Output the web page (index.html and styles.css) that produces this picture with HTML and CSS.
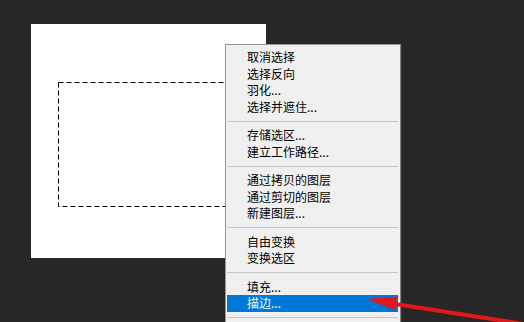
FILE: index.html
```html
<!DOCTYPE html>
<html lang="zh-CN">
<head>
<meta charset="utf-8">
<title>选区菜单</title>
<link rel="stylesheet" href="styles.css">
</head>
<body>
<div class="workspace">
  <div class="canvas">
    <svg class="marquee" width="167" height="130" viewBox="0 0 167 130">
      <path d="M0.5 0.5 H167 M0.5 0.5 V124.5 H167" fill="none" stroke="#000" stroke-width="1" stroke-dasharray="5 3"/>
    </svg>
  </div>

  <div class="menu">
    <div class="item">取消选择</div>
    <div class="item">选择反向</div>
    <div class="item">羽化...</div>
    <div class="item">选择并遮住...</div>
    <div class="sep"></div>
    <div class="item">存储选区...</div>
    <div class="item">建立工作路径...</div>
    <div class="sep"></div>
    <div class="item">通过拷贝的图层</div>
    <div class="item">通过剪切的图层</div>
    <div class="item">新建图层...</div>
    <div class="sep"></div>
    <div class="item">自由变换</div>
    <div class="item">变换选区</div>
    <div class="sep"></div>
    <div class="item">填充...</div>
    <div class="item active">描边...</div>
    <div class="sep"></div>
  </div>

  <svg class="arrow" width="524" height="322" viewBox="0 0 524 322">
    <line x1="392" y1="303.5" x2="530" y2="325" stroke="#e3161b" stroke-width="4"/>
    <polygon points="366,299 398.5,296.5 394,304 396.5,310.5" fill="#e3161b"/>
  </svg>
</div>
</body>
</html>
```

FILE: styles.css
```css
html, body {
  margin: 0;
  padding: 0;
  background: #272727;
  overflow: hidden;
}

.workspace {
  width: 524px;
  height: 322px;
  overflow: hidden;
  position: relative;
  padding-top: 24px;
  box-sizing: border-box;
}

.canvas {
  margin-left: 31px;
  width: 235px;
  height: 234px;
  background: #ffffff;
  padding: 58px 0 0 27px;
  box-sizing: border-box;
}

.marquee {
  display: block;
}

.menu {
  position: absolute;
  left: 225px;
  top: 44px;
  width: 176px;
  height: 300px;
  box-sizing: border-box;
  background: #f0f0f0;
  border: 1px solid #979797;
  border-right-color: #7c7c7c;
  padding: 4px 2px 0 1px;
  font-family: "Noto Sans CJK SC", "Noto Sans", sans-serif;
  font-size: 12px;
  color: #000;
  box-shadow: 1px 1px 0 #3a3a3a;
}

.item {
  height: 16.5px;
  line-height: 16.5px;
  padding-left: 20px;
  white-space: nowrap;
}

.item.active {
  background: #0078d7;
  color: #ffffff;
}

.sep {
  height: 12px;
  display: flex;
  align-items: center;
}

.sep::before {
  content: "";
  display: block;
  width: 100%;
  height: 1px;
  background: #c6c6c6;
}

.arrow {
  position: absolute;
  left: 0;
  top: 0;
  pointer-events: none;
}
```
